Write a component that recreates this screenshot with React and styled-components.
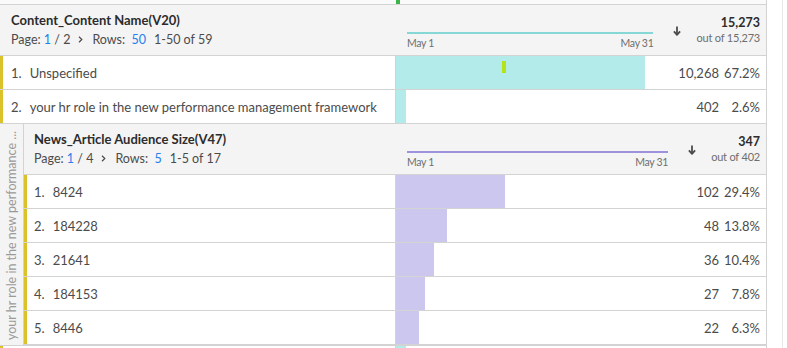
import styled, { createGlobalStyle } from 'styled-components'

const GlobalStyle = createGlobalStyle`
    html, body {
        margin: 0;
        padding: 0;
        background: #fff;
    }
    body {
        font-family: Lato, "Open Sans", sans-serif;
        color: #4b4b4b;
    }
`

const Page = styled.div`
    display: flex;
    width: 787px;
    height: 348px;
    overflow: hidden;
`

const Main = styled.div`
    width: 766px;
    border-right: 1px solid #d3d3d3;
    flex-shrink: 0;
`

const Gutter = styled.div`
    width: 15px;
    border-right: 1px solid #e8e8e8;
`

const TopStrip = styled.div`
    display: grid;
    grid-template-columns: 396px 1fr;
    height: 4px;
    background: #fafafa;
    border-bottom: 1px solid #d3d3d3;
`

const Tick = styled.div`
    width: 4px;
    height: 4px;
    background: #3cb44a;
`

const Header = styled.div`
    display: grid;
    grid-template-columns: ${p => p.$labelWidth}px 1fr;
    height: 50px;
    background: #f4f4f4;
    border-bottom: 1px solid #d3d3d3;
`

const HeaderLabel = styled.div`
    padding: 7px 0 0 ${p => p.$pad}px;
`

const Title = styled.div`
    font-size: 13px;
    line-height: 16px;
    font-weight: 700;
    color: #2c2c2c;
`

const Paging = styled.div`
    display: flex;
    align-items: center;
    margin-top: 4px;
    font-size: 12.5px;
    line-height: 16px;
    color: #4b4b4b;
    white-space: pre;
`

const Link = styled.span`
    color: #2680eb;
`

const Chevron = styled.svg`
    width: 5px;
    height: 7px;
    margin: 0 9px 2px 8px;
`

const Range = styled.span`
    margin-left: 8px;
`

const HeaderRight = styled.div`
    display: flex;
    padding: 0 6px 0 12px;
`

const Chart = styled.div`
    flex: 1;
    padding-top: 27px;
`

const Line = styled.div`
    height: 2px;
    background: ${p => p.$color};
`

const ChartLabels = styled.div`
    display: flex;
    justify-content: space-between;
    margin-top: 3px;
    font-size: 10.5px;
    line-height: 12px;
    color: #6e6e6e;
    letter-spacing: -0.3px;
`

const SortArrow = styled.svg`
    margin: 21px 15px 0 20px;
    width: 8px;
    height: 10px;
    flex-shrink: 0;
`

const Totals = styled.div`
    padding-top: 10px;
    text-align: right;
    line-height: 15px;
`

const Total = styled.div`
    font-size: 12.5px;
    font-weight: 700;
    color: #2c2c2c;
`

const OutOf = styled.div`
    font-size: 11px;
    letter-spacing: -0.2px;
    color: #6e6e6e;
`

const Row = styled.div`
    display: grid;
    grid-template-columns: ${p => p.$labelWidth}px 1fr;
    height: 33px;
    border-bottom: 1px solid #d3d3d3;
    background: #fff;
`

const RowLabel = styled.div`
    display: flex;
    align-items: center;
    border-left: 3px solid #dbc22a;
    padding-left: ${p => p.$pad}px;
    font-size: 13px;
    white-space: nowrap;
    overflow: hidden;
`

const Num = styled.span`
    margin-right: 8px;
`

const BarCell = styled.div`
    position: relative;
    display: flex;
    align-items: center;
    justify-content: flex-end;
    border-left: 1px solid #d3d3d3;
    padding-right: 6px;
    font-size: 13px;
`

const Bar = styled.div`
    position: absolute;
    left: 0;
    top: 0;
    bottom: 0;
    background: ${p => p.$color};
`

const Marker = styled.div`
    position: absolute;
    left: 106px;
    top: 5px;
    width: 4px;
    height: 12px;
    background: #b5e31b;
`

const Count = styled.span`
    position: relative;
`

const Pct = styled.span`
    position: relative;
    width: 41px;
    text-align: right;
`

const Nested = styled.div`
    display: flex;
    border-bottom: 1px solid #d3d3d3;
`

const Side = styled.div`
    width: 23px;
    border-right: 1px solid #d3d3d3;
    background: #f4f4f4;
    display: flex;
    justify-content: center;
`

const SideText = styled.div`
    writing-mode: vertical-rl;
    transform: rotate(180deg);
    padding-top: 5px;
    font-size: 12.5px;
    line-height: 23px;
    color: #9a9a9a;
    white-space: nowrap;
`

const NestedBody = styled.div`
    flex: 1;
`

const outerRows = [
    { n: 1, label: 'Unspecified', count: '10,268', pct: 67.2, marker: true },
    { n: 2, label: 'your hr role in the new performance management framework', count: '402', pct: 2.6 },
]

const innerRows = [
    { n: 1, label: '8424', count: '102', pct: 29.4 },
    { n: 2, label: '184228', count: '48', pct: 13.8 },
    { n: 3, label: '21641', count: '36', pct: 10.4 },
    { n: 4, label: '184153', count: '27', pct: 7.8 },
    { n: 5, label: '8446', count: '22', pct: 6.3 },
]

const BAR_WIDTH = 370

const Arrow = () => (
    <SortArrow viewBox="0 0 8 10">
        <path d="M4 0.5 V8.6" stroke="#4b4b4b" strokeWidth="1.8" fill="none" />
        <path d="M0.9 5.4 L4 8.8 L7.1 5.4" stroke="#4b4b4b" strokeWidth="1.8" fill="none" strokeLinejoin="round" />
    </SortArrow>
)

const TableHeader = ({ labelWidth, pad, title, page, pages, rows, range, lineColor, total, outOf }) => (
    <Header $labelWidth={labelWidth}>
        <HeaderLabel $pad={pad}>
            <Title>{title}</Title>
            <Paging>
                Page: <Link>{page}</Link> / {pages}
                <Chevron viewBox="0 0 5 7">
                    <path d="M1 0.8 L3.8 3.5 L1 6.2" stroke="#4b4b4b" strokeWidth="1.2" fill="none" />
                </Chevron>
                Rows:  <Link>{rows}</Link>
                <Range>{range}</Range>
            </Paging>
        </HeaderLabel>
        <HeaderRight>
            <Chart>
                <Line $color={lineColor} />
                <ChartLabels>
                    <span>May 1</span>
                    <span>May 31</span>
                </ChartLabels>
            </Chart>
            <Arrow />
            <Totals>
                <Total>{total}</Total>
                <OutOf>out of {outOf}</OutOf>
            </Totals>
        </HeaderRight>
    </Header>
)

const DataRow = ({ row, labelWidth, pad, barColor }) => (
    <Row $labelWidth={labelWidth}>
        <RowLabel $pad={pad}>
            {row.label && <><Num>{row.n}.</Num>{row.label}</>}
        </RowLabel>
        <BarCell>
            <Bar $color={barColor} style={{ width: `${(row.pct / 100) * BAR_WIDTH}px` }} />
            {row.marker && <Marker />}
            {row.count && <Count>{row.count}</Count>}
            {row.count && <Pct>{row.pct.toFixed(1)}%</Pct>}
        </BarCell>
    </Row>
)

export default function App() {
    return (
        <Page>
            <GlobalStyle />
            <Main>
                <TopStrip>
                    <span />
                    <Tick />
                </TopStrip>
                <TableHeader
                    labelWidth={395}
                    pad={11}
                    title="Content_Content Name(V20)"
                    page="1"
                    pages="2"
                    rows="50"
                    range="1-50 of 59"
                    lineColor="#86d8d6"
                    total="15,273"
                    outOf="15,273"
                />
                {outerRows.map(row => (
                    <DataRow key={row.n} row={row} labelWidth={395} pad={8} barColor="#b3eaea" />
                ))}
                <Nested>
                    <Side>
                        <SideText>your hr role in the new performance ...</SideText>
                    </Side>
                    <NestedBody>
                        <TableHeader
                            labelWidth={371}
                            pad={10}
                            title="News_Article Audience Size(V47)"
                            page="1"
                            pages="4"
                            rows="5"
                            range="1-5 of 17"
                            lineColor="#9d92de"
                            total="347"
                            outOf="402"
                        />
                        {innerRows.map(row => (
                            <DataRow key={row.n} row={row} labelWidth={371} pad={7} barColor="#cbc7ee" />
                        ))}
                    </NestedBody>
                </Nested>
                <DataRow row={{ n: 3, pct: 2.6 }} labelWidth={395} pad={8} barColor="#b3eaea" />
            </Main>
            <Gutter />
        </Page>
    )
}
